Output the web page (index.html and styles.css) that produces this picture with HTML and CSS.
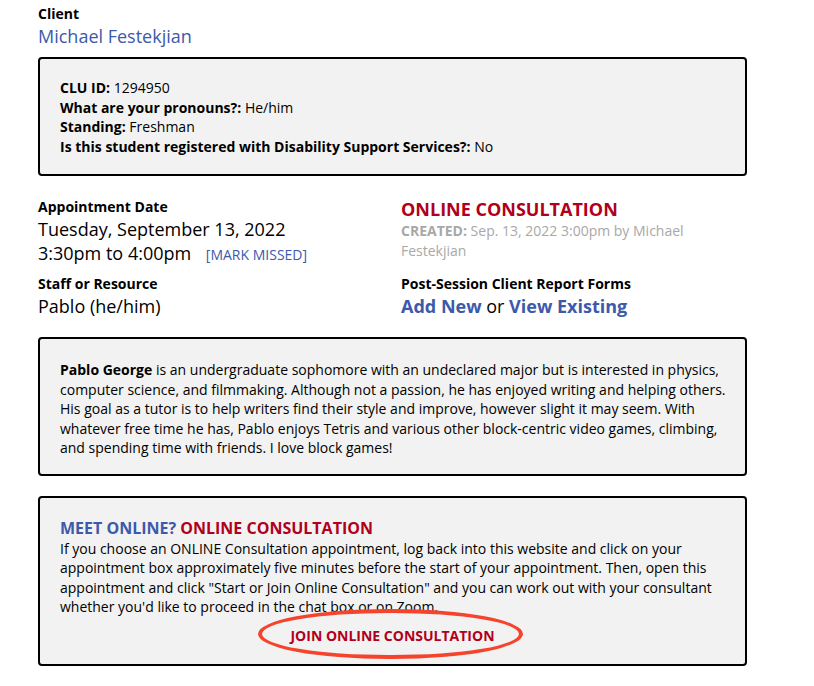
FILE: index.html
```html
<!DOCTYPE html>
<html>
<head>
<meta charset="utf-8">
<link rel="stylesheet" href="styles.css">
</head>
<body>
<div class="page">
  <div class="field-label">Client</div>
  <div class="client-name">Michael Festekjian</div>

  <div class="box info-box">
    <div><b>CLU ID:</b> 1294950</div>
    <div><b>What are your pronouns?:</b> He/him</div>
    <div><b>Standing:</b> Freshman</div>
    <div><b>Is this student registered with Disability Support Services?:</b> No</div>
  </div>

  <div class="details">
    <div class="cell">
      <div class="field-label">Appointment Date</div>
      <div class="big">Tuesday, September 13, 2022</div>
      <div class="big">3:30pm to 4:00pm <span class="mark">[MARK MISSED]</span></div>
    </div>
    <div class="cell">
      <div class="type">ONLINE CONSULTATION</div>
      <div class="created"><b>CREATED:</b> Sep. 13, 2022 3:00pm by Michael Festekjian</div>
    </div>
    <div class="cell">
      <div class="field-label">Staff or Resource</div>
      <div class="big">Pablo (he/him)</div>
    </div>
    <div class="cell">
      <div class="field-label">Post-Session Client Report Forms</div>
      <div class="big forms"><span class="link">Add New</span> or <span class="link">View Existing</span></div>
    </div>
  </div>

  <div class="box bio-box">
    <b>Pablo George</b> is an undergraduate sophomore with an undeclared major but is interested in physics, computer science, and filmmaking. Although not a passion, he has enjoyed writing and helping others. His goal as a tutor is to help writers find their style and improve, however slight it may seem. With whatever free time he has, Pablo enjoys Tetris and various other block-centric video games, climbing, and spending time with friends. I love block games!
  </div>

  <div class="box meet-box">
    <div class="meet-title"><span class="blue">MEET ONLINE?</span> <span class="red">ONLINE CONSULTATION</span></div>
    <div class="meet-text">If you choose an ONLINE Consultation appointment, log back into this website and click on your appointment box approximately five minutes before the start of your appointment. Then, open this appointment and click "Start or Join Online Consultation" and you can work out with your consultant whether you'd like to proceed in the chat box or on Zoom.</div>
    <div class="join-row"><span class="join">JOIN ONLINE CONSULTATION<span class="ring"></span></span></div>
  </div>
</div>
</body>
</html>
```
FILE: styles.css
```css
html, body {
  margin: 0;
  padding: 0;
  background: #fff;
}
body {
  font-family: "Open Sans", "Liberation Sans", sans-serif;
  color: #000;
}
.page {
  width: 709px;
  padding: 4px 0 0 38px;
}
.field-label {
  font-size: 14px;
  font-weight: 700;
  line-height: 20px;
}
.client-name {
  font-size: 18px;
  line-height: 24px;
  color: #3d59a9;
}
.box {
  background: #f2f2f2;
  border: 2px solid #000;
  border-radius: 4px;
}
.info-box {
  margin-top: 9px;
  font-size: 14px;
  line-height: 19.5px;
  padding: 19px 20px 18px;
}
.details {
  display: grid;
  grid-template-columns: 363px 300px;
  row-gap: 9px;
  margin-top: 21px;
}
.big {
  font-size: 18px;
  line-height: 24px;
}
.mark {
  font-size: 14px;
  line-height: 14px;
  color: #3d59a9;
  margin-left: 10px;
}
.type {
  font-size: 18px;
  font-weight: 700;
  color: #b1001a;
  line-height: 24px;
}
.created {
  font-size: 14px;
  line-height: 19.5px;
  color: #a8a8a8;
}
.forms .link {
  color: #3d59a9;
  font-weight: 700;
}
.bio-box {
  margin-top: 19px;
  font-size: 14px;
  line-height: 19.5px;
  padding: 21px 10px 16px 20px;
}
.meet-box {
  margin-top: 20px;
  font-size: 14px;
  line-height: 19.5px;
  padding: 20px 20px 19px;
}
.meet-title {
  font-size: 16px;
  font-weight: 700;
  line-height: 21px;
}
.blue { color: #3d59a9; }
.red { color: #b1001a; }
.join-row {
  text-align: center;
  margin-top: 9px;
}
.join {
  position: relative;
  display: inline-block;
  font-size: 14px;
  font-weight: 700;
  color: #b1001a;
}
.ring {
  position: absolute;
  left: -32px;
  right: -28px;
  top: -17px;
  bottom: -14px;
  border: 4px solid #f5432c;
  border-radius: 50%;
}
```
